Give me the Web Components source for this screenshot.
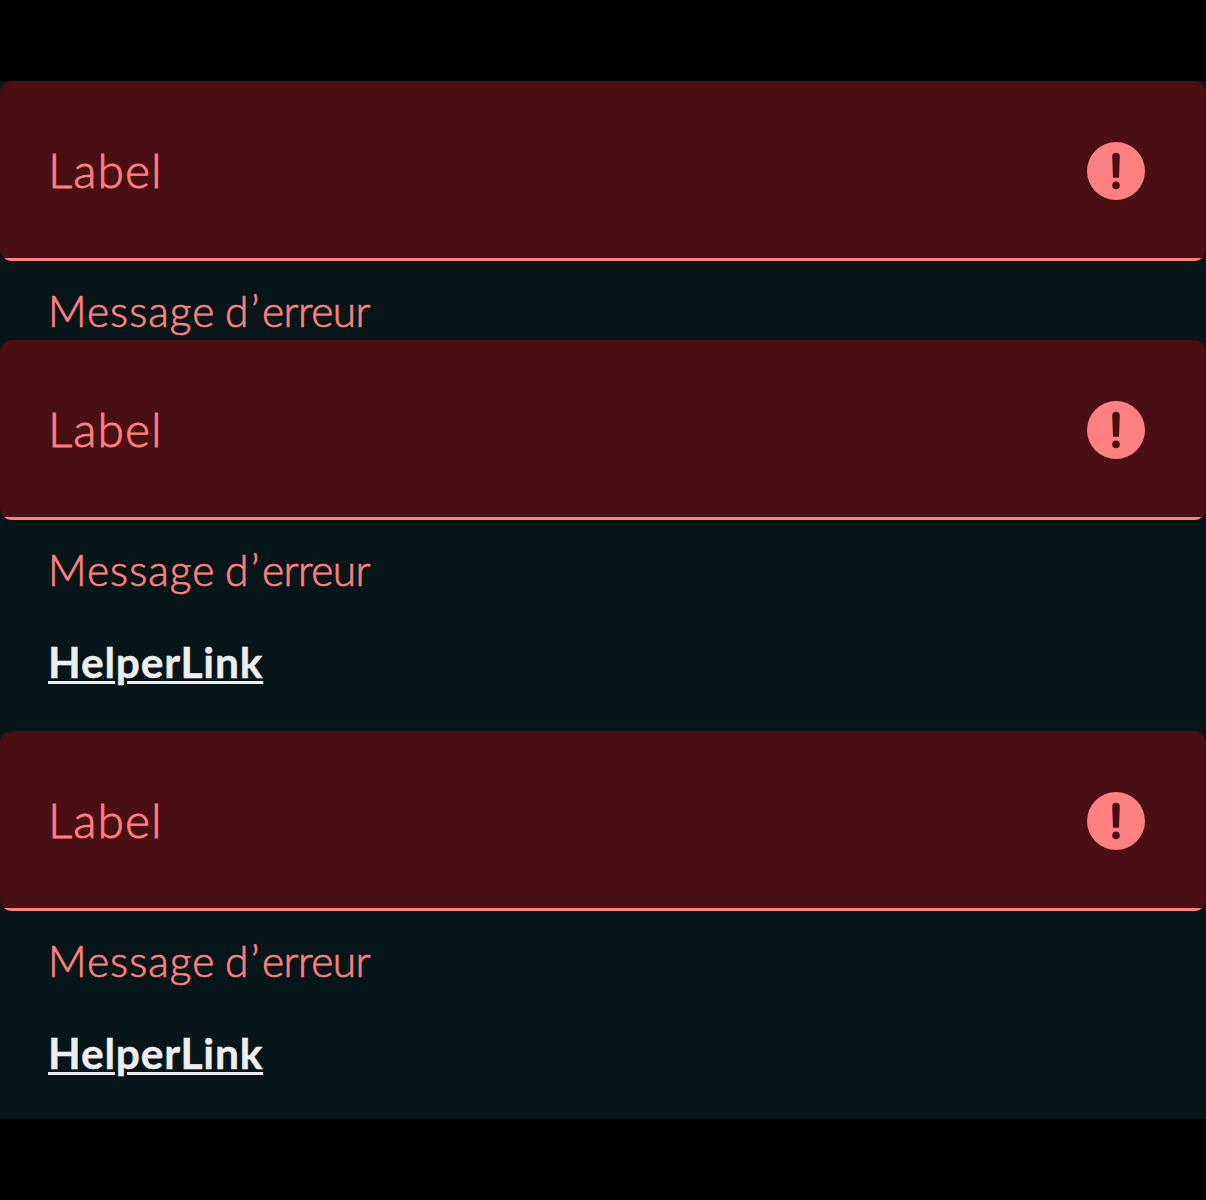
<!DOCTYPE html>
<html lang="fr">
<head>
<meta charset="utf-8">
<title>Champs en erreur</title>
<style>
body { margin: 0; background: #000; font-family: Lato, "Liberation Sans", sans-serif; }
.d { letter-spacing: 2.5px; }
.e { letter-spacing: -0.6px; }
</style>
</head>
<body>
<form-preview>
  <text-field label="Label"><span slot="message">Message <span class="d">d’</span><span class="e">erreur</span></span></text-field>
  <text-field label="Label"><span slot="message">Message <span class="d">d’</span><span class="e">erreur</span></span><helper-link slot="link">HelperLink</helper-link></text-field>
  <text-field label="Label"><span slot="message">Message <span class="d">d’</span><span class="e">erreur</span></span><helper-link slot="link">HelperLink</helper-link></text-field>
</form-preview>
<script>
const define = (name, html, setup) => customElements.define(name, class extends HTMLElement {
  constructor() {
    super();
    this.attachShadow({ mode: "open" }).innerHTML = html;
  }
  connectedCallback() { if (setup) setup(this, this.shadowRoot); }
});

define("form-preview", `
<style>
:host { display: flex; flex-direction: column; box-sizing: border-box; height: 1200px; padding: 81px 0; background: #000; }
.surface { display: flex; flex-direction: column; height: 1038px; flex: none; background: #061518; }
</style>
<div class="surface"><slot></slot></div>`);

define("error-icon", `
<style>
:host { display: block; width: 58px; height: 58px; flex: none; }
svg { display: block; }
</style>
<svg width="58" height="58" viewBox="0 0 58 58" aria-hidden="true">
  <circle cx="29" cy="29" r="29" fill="#ff8080"/>
  <path d="M25.2 14.6a3.8 3.8 0 0 1 7.6 0L32 35.8h-6zM29 39.6a3.8 3.8 0 1 1 0 7.6 3.8 3.8 0 0 1 0-7.6z" fill="#490f12"/>
</svg>`);

define("helper-link", `
<style>
:host { display: block; box-sizing: border-box; padding-top: 36px; height: 132px; }
a { display: block; width: max-content; color: #eee; font-size: 42.5px; line-height: 54px; font-weight: 700; letter-spacing: 0.8px;
  -webkit-text-stroke: 0.4px;
  text-decoration: underline; text-decoration-thickness: 3px; text-underline-offset: 3px; }
</style>
<a><slot></slot></a>`);

define("text-field", `
<style>
:host { display: block; color: #ff8080; flex: none; }
.field { display: flex; align-items: center; justify-content: space-between; box-sizing: border-box; height: 180px;
  padding: 0 61px 0 48px; border-radius: 12px; background: linear-gradient(#ff8080, #ff8080) left bottom / 100% 3px no-repeat #490f12; }
.label { font-size: 48px; line-height: 60px; padding-bottom: 2px; font-weight: 300; letter-spacing: 1px; -webkit-text-stroke: 0.8px; }
.below { padding: 22px 48px 0; }
.message { height: 57px; font-size: 42.5px; line-height: 55px; font-weight: 300; letter-spacing: 1px; word-spacing: -3px; white-space: nowrap; -webkit-text-stroke: 0.7px; }
</style>
<div class="field"><span class="label"></span><error-icon></error-icon></div>
<div class="below"><div class="message"><slot name="message"></slot></div><slot name="link"></slot></div>`,
(host, root) => { root.querySelector(".label").textContent = host.getAttribute("label"); });
</script>
</body>
</html>
